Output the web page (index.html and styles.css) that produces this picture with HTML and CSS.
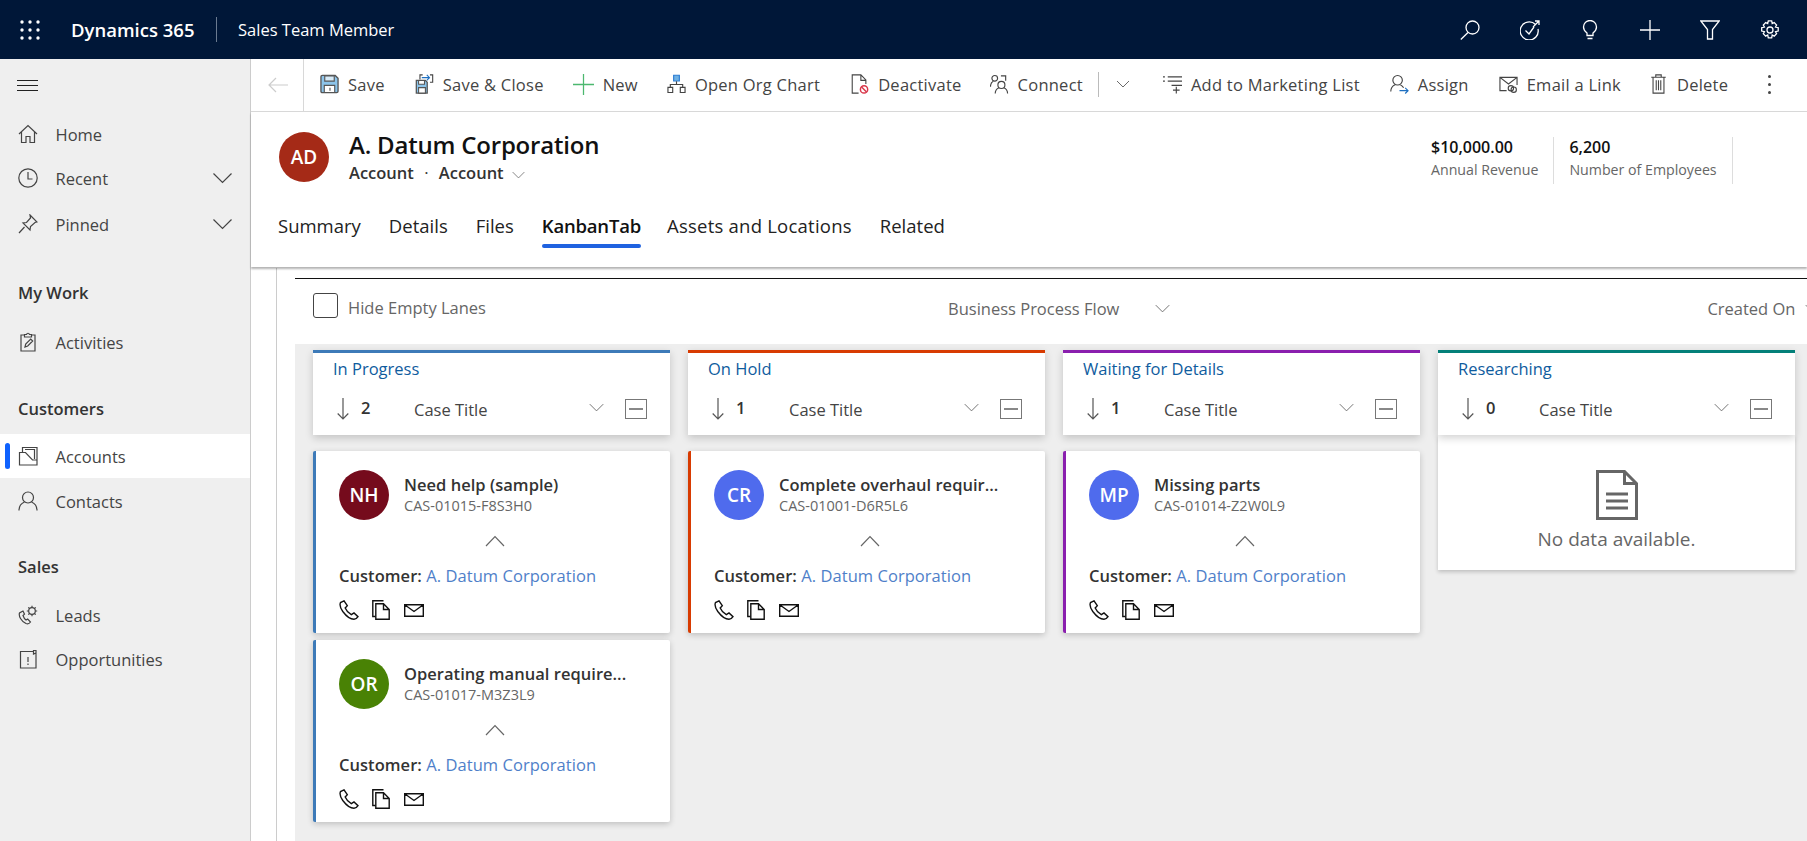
FILE: index.html
```html
<!DOCTYPE html>
<html lang="en">

<head>
    <meta charset="UTF-8">
    <title>A. Datum Corporation - Dynamics 365</title>
    <link rel="stylesheet" href="styles.css">
</head>

<body>
    <svg class="sprite" width="0" height="0">
        <symbol id="i-chev" viewBox="0 0 20 12"><path d="M1 1.500l9 9 9-9"/></symbol>
        <symbol id="i-chev-up" viewBox="0 0 20 12"><path d="M1 11L10 1.500 19 11"/></symbol>
        <symbol id="i-phone" viewBox="0 0 20 20"><path d="M5 .8L1.500 2.500C.4 5 1.300 8 3.800 11.500 6.800 15.500 11 19.300 15 19.300c1.700 0 2.800-.7 4-2.600l-4-3.800-2.700 1.800C10 13.500 7.500 11 6.200 8l2.100-2.300z"/></symbol>
        <symbol id="i-docs" viewBox="0 0 18 20"><path class="back-sheet" d="M3.500 16.500H.8V.8h10.700"/><path d="M3.800 3.800h7.700l5.700 5.700v9.700H3.800zM11.500 3.800v5.700h5.700"/></symbol>
        <symbol id="i-mail" viewBox="0 0 20 13"><path d="M.7.700h18.600v11.600H.7zM.7.700L10 7.500 19.300.7"/></symbol>
        <symbol id="i-arrow" viewBox="0 0 12 22"><path d="M6 0v21M.7 15.500L6 21l5.300-5.500"/></symbol>
    </svg>

    <header class="topbar">
        <svg class="waffle" viewBox="0 0 20 20"><g fill="#fff"><circle cx="2" cy="2" r="1.700"/><circle cx="10" cy="2" r="1.700"/><circle cx="18" cy="2" r="1.700"/><circle cx="2" cy="10" r="1.700"/><circle cx="10" cy="10" r="1.700"/><circle cx="18" cy="10" r="1.700"/><circle cx="2" cy="18" r="1.700"/><circle cx="10" cy="18" r="1.700"/><circle cx="18" cy="18" r="1.700"/></g></svg>
        <span class="brand">Dynamics 365</span>
        <span class="app-name">Sales Team Member</span>
        <div class="top-icons">
            <svg class="top-icon" viewBox="0 0 20 20"><circle cx="12.500" cy="7.500" r="6.500"/><path d="M8 12.500L.8 19.500"/></svg>
            <svg class="top-icon" viewBox="0 0 20 20"><path d="M15.500 4.500A9 9 0 1 0 18 9"/><path d="M5.500 10.500l3.500 3.500 5-7M13 7l6-6M15 1h4v4"/></svg>
            <svg class="top-icon" viewBox="0 0 20 20"><path d="M7 15.500V13C5 11.500 3.500 9.800 3.500 7a6.500 6.500 0 0 1 13 0c0 2.800-1.500 4.500-3.500 6v2.500zM7.500 18.500h5"/></svg>
            <svg class="top-icon" viewBox="0 0 20 20"><path d="M10 0v20M0 10h20"/></svg>
            <svg class="top-icon" viewBox="0 0 20 20"><path d="M.8 1h18.400L12.500 9.500V19h-5V9.500z"/></svg>
            <svg class="top-icon" viewBox="0 0 20 20"><circle cx="10" cy="10" r="3"/><path d="M8.300.8h3.400l.5 2.700 2-.9 2.400 2.400-1.100 2 2.700.7v3.400l-2.700.6 1.100 2-2.400 2.400-2-1.100-.5 2.800H8.300l-.6-2.800-2 1.100-2.400-2.400 1.100-2-2.700-.6V7.700l2.700-.7-1.100-2 2.400-2.400 2 .9z"/></svg>
        </div>
    </header>

    <div class="app">
        <nav class="sidebar">
            <svg class="burger" viewBox="0 0 21 11"><path d="M0 .5h21M0 5.500h21M0 10.500h21"/></svg>
            <a class="nav-item first">
                <svg class="nav-icon" viewBox="0 0 20 20"><path d="M1 10l9-8.500L19 10M3.500 8v10.500h4.500v-6h4v6h4.500V8"/></svg>Home
            </a>
            <a class="nav-item">
                <svg class="nav-icon" viewBox="0 0 20 20"><circle cx="10" cy="10" r="9.200"/><path d="M10 4v7h4.500"/></svg>Recent
                <svg class="nav-chev"><use href="#i-chev"/></svg>
            </a>
            <a class="nav-item pinned">
                <svg class="nav-icon" viewBox="0 0 20 20"><path d="M12 1l7 7-2 .5-4.500 4-.5 3.500-7-7 3.500-.5 4-4.500zM6.500 13L1 19"/></svg>Pinned
                <svg class="nav-chev"><use href="#i-chev"/></svg>
            </a>

            <div class="nav-group mywork">My Work</div>
            <a class="nav-item">
                <svg class="nav-icon" viewBox="0 0 20 20"><path d="M6.500 3H3v16h14V3h-3.500M6.500 5V2.500H8.500C9 .8 11 .8 11.500 2.500h2V5z"/><path d="M7 15l.7-3 5-5 2 2-5 5z"/></svg>Activities
            </a>

            <div class="nav-group customers">Customers</div>
            <a class="nav-item active">
                <svg class="nav-icon" viewBox="0 0 20 20"><path d="M1.500 19V6.500h6l7 7.500h4.500v5zM4.500 6.500V1.500H19V14M7 3.500h9.500V13"/></svg>Accounts
            </a>
            <a class="nav-item">
                <svg class="nav-icon" viewBox="0 0 20 20"><circle cx="10" cy="6.500" r="5.500"/><path d="M1 19.500c0-5 3-7.500 5.500-8.500M19 19.500c0-5-3-7.500-5.500-8.500"/></svg>Contacts
            </a>

            <div class="nav-group sales">Sales</div>
            <a class="nav-item">
                <svg class="nav-icon" viewBox="0 0 20 20"><path d="M5 6L1.500 8C.5 11 3 16 8 18.500c2 .8 3.500 0 4.500-1.500l-2.800-3-1.700 1C6.500 14 5.500 12 5 10.500l1.500-1.300z"/><circle cx="14" cy="6" r="3.300"/><path d="M14 .8v1.900M14 9.300v1.900M8.800 6h1.900M17.300 6h1.900M10.300 2.300l1.300 1.300M16.400 8.400l1.300 1.300M10.300 9.700l1.300-1.300M16.400 3.600l1.300-1.300"/></svg>Leads
            </a>
            <a class="nav-item">
                <svg class="nav-icon" viewBox="0 0 20 20"><path d="M15.500 2.500H2.500v16.500h15.500V1.500h-2.500v3.500l2.500-1M10 8v5M10 14.500v1.500"/></svg>Opportunities
            </a>
        </nav>

        <main class="content">
            <div class="commandbar">
                <div class="back">
                    <svg viewBox="0 0 20 16"><path d="M20 8H1M8 1L1 8l7 7"/></svg>
                </div>
                <button class="cmd save">
                    <svg viewBox="0 0 20 20"><path d="M1 2.500q0-1.500 1.500-1.500H16l3 3v13.500q0 1.500-1.500 1.500h-15Q1 19 1 17.500z" fill="#8cc4ea" stroke="#555" stroke-width="1.400"/><path d="M5 1.500h10v5.500H5z" fill="#d7ebf8" stroke="#555"/><path d="M4.500 11.500h11V19h-11z" fill="#fff" stroke="#555"/><path d="M10.500 14v3" stroke="#555"/></svg>Save
                </button>
                <button class="cmd save-close">
                    <svg viewBox="0 0 20 22"><path d="M1 7h10l2 2v12H1z" fill="#8cc4ea" stroke="#555" stroke-width="1.400"/><path d="M3.500 7.200h6.500v4H3.500zM3.500 15h7.500v6H3.500z" fill="#fff" stroke="#555"/><path class="blue" d="M7 4h8M12.500 1l3 3-3 3"/><path d="M5 6V1h3M16 1h3v8h-3"/></svg>Save &amp; Close
                </button>
                <button class="cmd new">
                    <svg viewBox="0 0 20 20"><path class="green" d="M10 0v20M0 10h20"/></svg>New
                </button>
                <button class="cmd org">
                    <svg viewBox="0 0 20 20"><path d="M7 .8h6v6H7z" fill="#6fb1e4" stroke="#2b7cd3"/><path d="M10 7v4M3.500 13.500V10.500h13v3"/><path d="M1 13.500h5v5.500H1zM14 13.500h5v5.500h-5z"/></svg>Open Org Chart
                </button>
                <button class="cmd deact">
                    <svg viewBox="0 0 20 22"><path d="M9 21H2V1h9.500L17 6.500V11M11.500 1v6H17"/><circle class="red" cx="15" cy="17" r="4" fill="#fff"/><path class="red" d="M12.300 14.300l5.400 5.400"/></svg>Deactivate
                </button>
                <button class="cmd connect">
                    <svg viewBox="0 0 20 20"><circle cx="5" cy="4" r="3"/><path d="M.5 13c0-3 1-5 3-6M11.500 1.500h5v5"/><circle cx="12" cy="11" r="3.700"/><path d="M5.500 20c0-3 1.500-5 4-6M18.500 20c0-3-1.500-5-4-6"/></svg>Connect
                </button>
                <div class="cmd-split">
                    <svg><use href="#i-chev"/></svg>
                </div>
                <button class="cmd addlist">
                    <svg viewBox="0 0 20 20"><path d="M5 2.500h15M5 7h15M9 11.500h11M0 2.500h2M0 7h2M14 13v7M10.500 16.500h7"/></svg>Add to Marketing List
                </button>
                <button class="cmd assign">
                    <svg viewBox="0 0 20 20"><circle cx="8" cy="6" r="5"/><path d="M.8 18c0-4 2-6 4.500-7.200M11 11c1.500.6 2.500 1.500 3.300 3"/><path class="blue" d="M10 17h9M16 14l3 3-3 3"/></svg>Assign
                </button>
                <button class="cmd email">
                    <svg viewBox="0 0 20 20"><path d="M8 17H1V3h18v8M1 3l9 7 9-7"/><circle cx="12.500" cy="14.500" r="2.800"/><circle cx="15.500" cy="16" r="2.800"/></svg>Email a Link
                </button>
                <button class="cmd delete">
                    <svg viewBox="0 0 18 22"><path d="M1 3.500h16M6 3.500V1h6v2.500M3 3.500h12V21H3zM6.500 7v11M9 7v11M11.500 7v11"/></svg>Delete
                </button>
                <div class="cmd-more"><i></i><i></i><i></i></div>
            </div>

            <section class="record">
                <div class="record-top">
                    <div class="avatar big" style="background:#a52a17">AD</div>
                    <div class="record-name">
                        <h1>A. Datum Corporation</h1>
                        <div class="record-type">Account <span class="dot">·</span> Account <svg><use href="#i-chev"/></svg></div>
                    </div>
                    <div class="kpi first">
                        <b>$10,000.00</b>
                        <span>Annual Revenue</span>
                    </div>
                    <div class="kpi">
                        <b>6,200</b>
                        <span>Number of Employees</span>
                    </div>
                </div>
                <div class="tabs">
                    <a>Summary</a>
                    <a>Details</a>
                    <a>Files</a>
                    <a class="selected">KanbanTab</a>
                    <a class="assets">Assets and Locations</a>
                    <a>Related</a>
                </div>
            </section>

            <div class="tab-body">
                <div class="kanban">
                    <div class="toolbar">
                        <label class="hide-empty"><span class="checkbox"></span>Hide Empty Lanes</label>
                        <div class="bpf">Business Process Flow <svg><use href="#i-chev"/></svg></div>
                        <div class="sort">Created On <svg><use href="#i-chev"/></svg></div>
                    </div>

                    <div class="board">
                        <div class="lane blue">
                            <div class="lane-head">
                                <div class="lane-title">In Progress</div>
                                <div class="lane-tools">
                                    <svg class="sort-arrow"><use href="#i-arrow"/></svg><b>2</b>
                                    <span class="lane-field">Case Title</span>
                                    <svg class="lane-chev"><use href="#i-chev"/></svg>
                                    <span class="collapse"></span>
                                </div>
                            </div>
                            <div class="card">
                                <div class="card-top">
                                    <div class="avatar" style="background:#750b1c">NH</div>
                                    <div>
                                        <div class="card-title">Need help (sample)</div>
                                        <div class="card-code">CAS-01015-F8S3H0</div>
                                    </div>
                                </div>
                                <svg class="card-chev"><use href="#i-chev-up"/></svg>
                                <div class="card-customer"><b>Customer:</b> <a>A. Datum Corporation</a></div>
                                <div class="card-icons">
                                    <svg class="ic-phone"><use href="#i-phone"/></svg>
                                    <svg class="ic-docs"><use href="#i-docs"/></svg>
                                    <svg class="ic-mail"><use href="#i-mail"/></svg>
                                </div>
                            </div>
                            <div class="card">
                                <div class="card-top">
                                    <div class="avatar" style="background:#498205">OR</div>
                                    <div>
                                        <div class="card-title">Operating manual require...</div>
                                        <div class="card-code">CAS-01017-M3Z3L9</div>
                                    </div>
                                </div>
                                <svg class="card-chev"><use href="#i-chev-up"/></svg>
                                <div class="card-customer"><b>Customer:</b> <a>A. Datum Corporation</a></div>
                                <div class="card-icons">
                                    <svg class="ic-phone"><use href="#i-phone"/></svg>
                                    <svg class="ic-docs"><use href="#i-docs"/></svg>
                                    <svg class="ic-mail"><use href="#i-mail"/></svg>
                                </div>
                            </div>
                        </div>

                        <div class="lane orange">
                            <div class="lane-head">
                                <div class="lane-title">On Hold</div>
                                <div class="lane-tools">
                                    <svg class="sort-arrow"><use href="#i-arrow"/></svg><b>1</b>
                                    <span class="lane-field">Case Title</span>
                                    <svg class="lane-chev"><use href="#i-chev"/></svg>
                                    <span class="collapse"></span>
                                </div>
                            </div>
                            <div class="card">
                                <div class="card-top">
                                    <div class="avatar" style="background:#4f6bed">CR</div>
                                    <div>
                                        <div class="card-title">Complete overhaul requir...</div>
                                        <div class="card-code">CAS-01001-D6R5L6</div>
                                    </div>
                                </div>
                                <svg class="card-chev"><use href="#i-chev-up"/></svg>
                                <div class="card-customer"><b>Customer:</b> <a>A. Datum Corporation</a></div>
                                <div class="card-icons">
                                    <svg class="ic-phone"><use href="#i-phone"/></svg>
                                    <svg class="ic-docs"><use href="#i-docs"/></svg>
                                    <svg class="ic-mail"><use href="#i-mail"/></svg>
                                </div>
                            </div>
                        </div>

                        <div class="lane purple">
                            <div class="lane-head">
                                <div class="lane-title">Waiting for Details</div>
                                <div class="lane-tools">
                                    <svg class="sort-arrow"><use href="#i-arrow"/></svg><b>1</b>
                                    <span class="lane-field">Case Title</span>
                                    <svg class="lane-chev"><use href="#i-chev"/></svg>
                                    <span class="collapse"></span>
                                </div>
                            </div>
                            <div class="card">
                                <div class="card-top">
                                    <div class="avatar" style="background:#4f6bed">MP</div>
                                    <div>
                                        <div class="card-title">Missing parts</div>
                                        <div class="card-code">CAS-01014-Z2W0L9</div>
                                    </div>
                                </div>
                                <svg class="card-chev"><use href="#i-chev-up"/></svg>
                                <div class="card-customer"><b>Customer:</b> <a>A. Datum Corporation</a></div>
                                <div class="card-icons">
                                    <svg class="ic-phone"><use href="#i-phone"/></svg>
                                    <svg class="ic-docs"><use href="#i-docs"/></svg>
                                    <svg class="ic-mail"><use href="#i-mail"/></svg>
                                </div>
                            </div>
                        </div>

                        <div class="lane teal">
                            <div class="lane-head">
                                <div class="lane-title">Researching</div>
                                <div class="lane-tools">
                                    <svg class="sort-arrow"><use href="#i-arrow"/></svg><b>0</b>
                                    <span class="lane-field">Case Title</span>
                                    <svg class="lane-chev"><use href="#i-chev"/></svg>
                                    <span class="collapse"></span>
                                </div>
                            </div>
                            <div class="empty">
                                <svg viewBox="0 0 42 50"><path d="M1.500 1.500h27l12 12v35h-39z"/><path d="M28.500 1.500v12h12"/><path class="thick" d="M10 24h22M10 31h22M10 38h22"/></svg>
                                <div>No data available.</div>
                            </div>
                        </div>
                    </div>
                </div>
            </div>
        </main>
    </div>
</body>

</html>
```

FILE: styles.css
```css
* {
    box-sizing: border-box;
}

body {
    margin: 0;
    width: 1807px;
    height: 841px;
    overflow: hidden;
    font-family: "Open Sans", "Noto Sans", Arial, sans-serif;
    font-size: 16.500px;
    color: #333;
    background: #fff;
}

svg {
    fill: none;
    stroke: #444;
    stroke-width: 1.2;
    flex: none;
}

.sprite {
    position: absolute;
}

/* top bar */
.topbar {
    height: 59px;
    background: #001738;
    color: #fff;
    display: flex;
    align-items: center;
}

.waffle {
    width: 20px;
    height: 20px;
    margin-left: 20px;
    stroke: none;
}

.brand {
    margin-left: 31px;
    font-size: 18.500px;
    font-weight: 600;
    width: 146px;
    height: 25px;
    line-height: 25px;
    border-right: 1px solid #6a7a90;
    white-space: nowrap;
}

.app-name {
    margin-left: 21px;
}

.top-icons {
    margin-left: auto;
    margin-right: 27px;
    display: flex;
    gap: 40px;
}

.top-icon {
    width: 20px;
    height: 20px;
    stroke: #fff;
    stroke-width: 1.300;
}

/* sidebar */
.app {
    display: flex;
    height: 782px;
}

.sidebar {
    width: 251px;
    flex: none;
    background: #efefef;
    border-right: 1px solid #ccc;
}

.burger {
    display: block;
    width: 21px;
    height: 11px;
    margin: 21px 0 0 17px;
    stroke: #222;
}

.nav-item {
    display: flex;
    align-items: center;
    height: 44px;
    padding-left: 18px;
    color: #444;
}

.nav-item.first {
    margin-top: 21px;
}

.nav-item.pinned {
    margin-top: 2px;
}

.nav-icon {
    width: 20px;
    height: 20px;
    margin-right: 17.500px;
}

.nav-chev {
    width: 21px;
    height: 12px;
    margin-left: auto;
    margin-right: 17px;
}

.nav-group {
    margin: 24px 0 5px;
    height: 44px;
    line-height: 44px;
    padding-left: 18px;
    font-weight: 600;
}

.nav-group.mywork {
    margin-top: 25px;
}

.nav-group.customers {
    margin: 23px 0 3px;
}

.nav-group.customers + .nav-item + .nav-item {
    margin-top: 1px;
}

.nav-group.sales {
    margin: 22px 0 4px;
}

.nav-item.active {
    background: #fff;
    position: relative;
}

.nav-item.active::before {
    content: "";
    position: absolute;
    left: 5px;
    top: 9px;
    width: 5px;
    height: 26px;
    border-radius: 3px;
    background: #0f62fe;
}

/* command bar */
.content {
    flex: 1;
    min-width: 0;
    display: flex;
    flex-direction: column;
}

.commandbar {
    height: 53px;
    border-bottom: 1px solid #d8d8d8;
    display: flex;
    align-items: center;
}

.back {
    width: 53px;
    height: 52px;
    border-right: 1px solid #d8d8d8;
    display: flex;
    align-items: center;
    padding-left: 17px;
}

.back svg {
    width: 20px;
    height: 16px;
    stroke: #ccc;
}

.cmd {
    border: none;
    background: none;
    padding: 0;
    margin-top: -2px;
    font: inherit;
    color: #444;
    letter-spacing: .25px;
    display: flex;
    align-items: center;
    white-space: nowrap;
}

.cmd svg {
    width: 19px;
    height: 20px;
    margin-right: 9px;
}

.cmd .blue,
.assign .blue {
    stroke: #1e6fc0;
}

.cmd .green {
    stroke: #4cb86f;
}

.cmd .red {
    stroke: #d9364a;
    stroke-width: 1.600;
}

.save { margin-left: 16px; }
.save-close { margin-left: 30px; }
.new { margin-left: 29px; }
.new svg { width: 21px; height: 21px; }
.org { margin-left: 29px; }
.deact { margin-left: 30px; }
.connect { margin-left: 28px; }
.addlist { margin-left: 33px; }
.assign { margin-left: 30px; }
.email { margin-left: 30px; }
.delete { margin-left: 28px; }

.cmd-split {
    margin: -2px 0 0 15px;
    height: 25px;
    padding-left: 17px;
    border-left: 1px solid #bbb;
    display: flex;
    align-items: center;
}

.cmd-split svg {
    width: 14px;
    height: 8px;
}

.cmd-more {
    margin: -2px 0 0 40px;
    display: flex;
    flex-direction: column;
    gap: 5px;
}

.cmd-more i {
    width: 3px;
    height: 3px;
    border-radius: 50%;
    background: #444;
}

/* record header */
.record {
    height: 155px;
    flex: none;
    box-shadow: 0 2px 2px rgba(0, 0, 0, .3);
    position: relative;
}

.record-top {
    display: flex;
    padding: 20px 0 0 28px;
    height: 93px;
}

.avatar {
    width: 50px;
    height: 50px;
    border-radius: 50%;
    flex: none;
    color: #fff;
    font-size: 19px;
    font-weight: 600;
    display: flex;
    align-items: center;
    justify-content: center;
}

.record-name {
    margin-left: 20px;
    width: 1082px;
}

h1 {
    margin: -1px 0 0;
    font-size: 24px;
    line-height: 28px;
    font-weight: 600;
    color: #111;
    letter-spacing: -.2px;
}

.record-type {
    font-weight: 600;
    line-height: 26px;
    margin-top: 1px;
}

.record-type .dot {
    margin: 0 6px;
    font-weight: 400;
}

.record-type svg {
    width: 13px;
    height: 8px;
    margin-left: 4px;
    stroke: #666;
}

.kpi {
    height: 47px;
    margin-top: 5px;
    padding-right: 15px;
    margin-right: 15px;
    border-right: 1px solid #ddd;
    display: flex;
    flex-direction: column;
    white-space: nowrap;
}

.kpi b {
    font-size: 16px;
    line-height: 20px;
    font-weight: 600;
    color: #111;
}

.kpi span {
    font-size: 14.200px;
    line-height: 26px;
    color: #666;
}

.tabs {
    display: flex;
    gap: 28px;
    padding-left: 27px;
    padding-top: 1px;
}

.tabs a {
    font-size: 18.500px;
    height: 40px;
    line-height: 40px;
    color: #222;
    position: relative;
}

.tabs a.selected {
    font-weight: 600;
    color: #111;
    letter-spacing: -.2px;
}

.tabs a.assets {
    margin-left: -2px;
    letter-spacing: .23px;
}

.tabs a.selected::after {
    content: "";
    position: absolute;
    left: 0;
    right: 0;
    bottom: -2px;
    height: 4px;
    border-radius: 2px;
    background: #1f62e0;
}

/* kanban */
.tab-body {
    flex: 1;
    min-height: 0;
    margin-left: 25px;
    margin-top: 1px;
    padding-left: 18px;
    border-left: 1px solid #ccc;
}

.kanban {
    margin-top: 10px;
    border-top: 1px solid #111;
    height: 100%;
}

.toolbar {
    height: 65px;
    padding-bottom: 6px;
    display: flex;
    align-items: center;
    color: #666;
    white-space: nowrap;
    overflow: hidden;
}

.hide-empty {
    display: flex;
    align-items: center;
    flex: none;
    width: 635px;
    margin: -2px 0 0 18px;
}

.checkbox {
    width: 25px;
    height: 25px;
    border: 1px solid #444;
    border-radius: 3px;
    margin: 0 10px 4px 0;
}

.bpf,
.sort {
    display: flex;
    align-items: center;
    flex: none;
}

.bpf svg {
    width: 15px;
    height: 9px;
    margin-left: 36px;
    stroke: #666;
}

.sort {
    margin-left: 537px;
}

.sort svg {
    width: 15px;
    height: 9px;
    margin-left: 10px;
    stroke: #666;
}

.board {
    height: 500px;
    background: #eee;
    padding: 6px 0 0 18px;
    display: flex;
    gap: 18px;
}

.lane {
    width: 357px;
    flex: none;
    --lane: #3d7ab8;
}

.lane.orange { --lane: #d83b01; }
.lane.purple { --lane: #8a1fae; }
.lane.teal { --lane: #038079; }

.lane-head {
    height: 85px;
    background: #fff;
    border-top: 3px solid var(--lane);
    box-shadow: 0 3px 8px rgba(0, 0, 0, .18);
    position: relative;
}

.lane-title {
    padding: 5px 0 0 20px;
    color: #0f5c9e;
    line-height: 22px;
}

.lane-tools {
    display: flex;
    align-items: center;
    padding: 17px 0 0 24px;
}

.sort-arrow {
    width: 12px;
    height: 22px;
    stroke: #555;
}

.lane-tools b {
    width: 53px;
    margin-left: 12px;
    font-weight: 600;
    margin-top: -4px;
}

.lane-field {
    width: 175px;
    margin-top: 1px;
    color: #444;
}

.lane-chev {
    width: 15px;
    height: 9px;
    margin-top: -4px;
    stroke: #666;
}

.collapse {
    width: 22px;
    height: 20px;
    margin-left: 21px;
    border: 1px solid #777;
    display: flex;
    align-items: center;
    justify-content: center;
}

.collapse::before {
    content: "";
    width: 14px;
    height: 1.500px;
    background: #888;
}

.card {
    margin-top: 16px;
    height: 182px;
    background: #fff;
    border-left: 3px solid var(--lane);
    border-radius: 2px;
    box-shadow: 0 2px 6px rgba(0, 0, 0, .2);
    padding: 19px 0 0 23px;
}

.card + .card {
    margin-top: 7px;
}

.card-top {
    display: flex;
    height: 50px;
}

.card-title {
    margin: 4px 0 0 15px;
    font-weight: 600;
    line-height: 22px;
    white-space: nowrap;
    letter-spacing: .03px;
}

.card-code {
    margin: 1px 0 0 15px;
    font-size: 14.500px;
    color: #666;
    line-height: 18px;
}

.card-chev {
    display: block;
    width: 20px;
    height: 12px;
    margin: 15px 0 0 146px;
    stroke: #666;
}

.card-customer {
    margin-top: 17px;
    line-height: 24px;
    letter-spacing: .05px;
}

.card-customer b {
    font-weight: 600;
}

.card-customer a {
    color: #4f7fc9;
}

.card-icons {
    display: flex;
    align-items: flex-start;
    margin-top: 12px;
}

.card-icons svg {
    stroke: #111;
    stroke-width: 1.400;
}

.ic-phone {
    width: 20px;
    height: 20px;
}

.ic-docs {
    width: 18px;
    height: 20px;
    margin-left: 13px;
}

.ic-mail {
    width: 20px;
    height: 13px;
    margin: 4px 0 0 14px;
}

.empty {
    height: 135px;
    background: #fff;
    box-shadow: 0 2px 4px rgba(0, 0, 0, .2);
    text-align: center;
    color: #666;
    font-size: 19px;
    padding-top: 35px;
}

.empty svg {
    display: block;
    width: 42px;
    height: 50px;
    margin: 0 auto 6px;
    stroke: #666;
    stroke-width: 3;
}

.empty .thick {
    stroke-width: 3;
}
```
